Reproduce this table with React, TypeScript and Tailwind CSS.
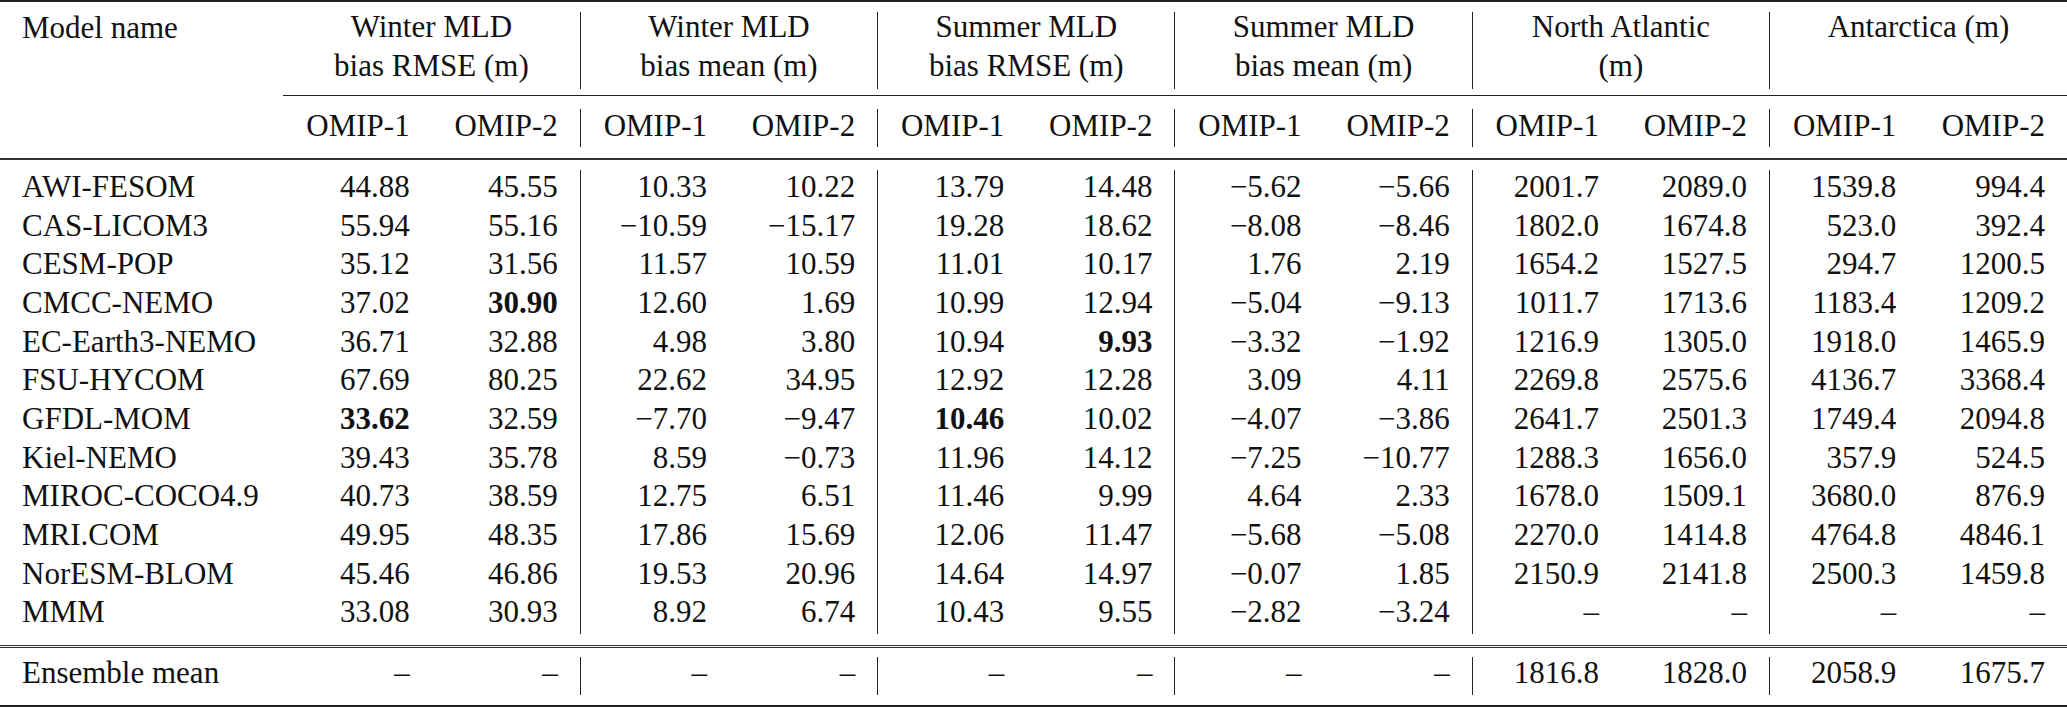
import React from "react";

const rows: string[][] = [
  ["AWI-FESOM", "44.88", "45.55", "10.33", "10.22", "13.79", "14.48", "−5.62", "−5.66", "2001.7", "2089.0", "1539.8", "994.4"],
  ["CAS-LICOM3", "55.94", "55.16", "−10.59", "−15.17", "19.28", "18.62", "−8.08", "−8.46", "1802.0", "1674.8", "523.0", "392.4"],
  ["CESM-POP", "35.12", "31.56", "11.57", "10.59", "11.01", "10.17", "1.76", "2.19", "1654.2", "1527.5", "294.7", "1200.5"],
  ["CMCC-NEMO", "37.02", "*30.90", "12.60", "1.69", "10.99", "12.94", "−5.04", "−9.13", "1011.7", "1713.6", "1183.4", "1209.2"],
  ["EC-Earth3-NEMO", "36.71", "32.88", "4.98", "3.80", "10.94", "*9.93", "−3.32", "−1.92", "1216.9", "1305.0", "1918.0", "1465.9"],
  ["FSU-HYCOM", "67.69", "80.25", "22.62", "34.95", "12.92", "12.28", "3.09", "4.11", "2269.8", "2575.6", "4136.7", "3368.4"],
  ["GFDL-MOM", "*33.62", "32.59", "−7.70", "−9.47", "*10.46", "10.02", "−4.07", "−3.86", "2641.7", "2501.3", "1749.4", "2094.8"],
  ["Kiel-NEMO", "39.43", "35.78", "8.59", "−0.73", "11.96", "14.12", "−7.25", "−10.77", "1288.3", "1656.0", "357.9", "524.5"],
  ["MIROC-COCO4.9", "40.73", "38.59", "12.75", "6.51", "11.46", "9.99", "4.64", "2.33", "1678.0", "1509.1", "3680.0", "876.9"],
  ["MRI.COM", "49.95", "48.35", "17.86", "15.69", "12.06", "11.47", "−5.68", "−5.08", "2270.0", "1414.8", "4764.8", "4846.1"],
  ["NorESM-BLOM", "45.46", "46.86", "19.53", "20.96", "14.64", "14.97", "−0.07", "1.85", "2150.9", "2141.8", "2500.3", "1459.8"],
  ["MMM", "33.08", "30.93", "8.92", "6.74", "10.43", "9.55", "−2.82", "−3.24", "–", "–", "–", "–"],
];

const ensemble = ["Ensemble mean", "–", "–", "–", "–", "–", "–", "–", "–", "1816.8", "1828.0", "2058.9", "1675.7"];

const groups: [string, string][] = [
  ["Winter MLD", "bias RMSE (m)"],
  ["Winter MLD", "bias mean (m)"],
  ["Summer MLD", "bias RMSE (m)"],
  ["Summer MLD", "bias mean (m)"],
  ["North Atlantic", "(m)"],
  ["Antarctica (m)", ""],
];

function Spacer({ h }: { h: string }) {
  return (
    <tr className={h}>
      <td colSpan={13} className="p-0" />
    </tr>
  );
}

function Rule({ cls }: { cls: string }) {
  return (
    <tr>
      <td colSpan={13} className="p-0">
        <div className={cls} />
      </td>
    </tr>
  );
}

function DataRow({ r, h, lead }: { r: string[]; h: string; lead: string }) {
  return (
    <tr className={h}>
      <td className={`p-0 pl-[22px] align-top whitespace-nowrap text-left ${lead}`}>{r[0]}</td>
      {r.slice(1).map((v, j) => {
        const bold = v.startsWith("*");
        const text = bold ? v.slice(1) : v;
        const div = j % 2 === 1 && j < 11;
        return (
          <td
            key={j}
            className={`p-0 pr-[22px] align-top text-right whitespace-nowrap ${lead} ${div ? "border-r border-[#222]" : ""} ${bold ? "font-bold" : ""}`}
          >
            {text}
          </td>
        );
      })}
    </tr>
  );
}

export default function App() {
  return (
    <div className="w-[2067px] h-[707px] bg-white text-[#111] font-serif text-[31px] overflow-hidden">
      <table className="table-fixed border-collapse w-[2067px] font-['Liberation_Serif',serif]">
        <colgroup>
          <col className="w-[283px]" />
          {Array.from({ length: 12 }).map((_, i) => (
            <col key={i} className="w-[148.667px]" />
          ))}
        </colgroup>
        <tbody>
          <Rule cls="h-[2px] bg-[#222]" />
          <Spacer h="h-[10px]" />
          <tr className="h-[77px]">
            <td className="p-0 pl-[22px] align-top text-left whitespace-nowrap">
              <div className="-mt-[3px] leading-[38.5px]">Model name</div>
            </td>
            {groups.map(([a, b], i) => (
              <td
                key={i}
                colSpan={2}
                className={`p-0 align-top text-center whitespace-nowrap ${i < 5 ? "border-r border-[#222]" : ""}`}
              >
                <div className="-mt-[4px] leading-[38.5px]">
                  <div>{a}</div>
                  <div>{b || "\u00a0"}</div>
                </div>
              </td>
            ))}
          </tr>
          <tr className="h-[20px]">
            <td className="p-0" />
            <td colSpan={12} className="p-0 align-top">
              <div className="mt-[6px] h-px bg-[#222]" />
            </td>
          </tr>
          <tr className="h-[38px]">
            <td className="p-0" />
            {Array.from({ length: 12 }).map((_, j) => (
              <td
                key={j}
                className={`p-0 pr-[22px] align-top text-right whitespace-nowrap leading-[33px] ${j % 2 === 1 && j < 11 ? "border-r border-[#222]" : ""}`}
              >
                {j % 2 === 0 ? "OMIP-1" : "OMIP-2"}
              </td>
            ))}
          </tr>
          <Spacer h="h-[11px]" />
          <Rule cls="h-[2px] bg-[#333]" />
          <Spacer h="h-[10px]" />
          {rows.map((r, i) => (
            <DataRow key={i} r={r} h="h-[38.667px]" lead="leading-[33px]" />
          ))}
          <Spacer h="h-[11px]" />
          <Rule cls="h-[3px] border-y border-[#333]" />
          <Spacer h="h-[9px]" />
          <DataRow r={ensemble} h="h-[38px]" lead="leading-[31px]" />
          <Spacer h="h-[10px]" />
          <Rule cls="h-[2px] bg-[#222]" />
        </tbody>
      </table>
    </div>
  );
}
